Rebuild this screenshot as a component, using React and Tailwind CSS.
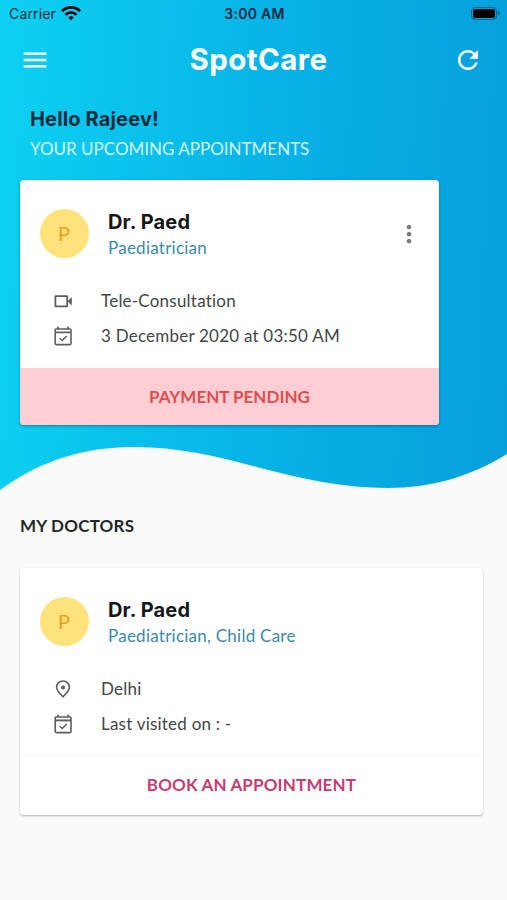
import React from 'react';
import { MdMenu, MdMoreVert, MdRefresh, MdWifi } from 'react-icons/md';

const VideoIcon = () => (
  <svg viewBox="0 0 24 24" className="w-6 h-6" fill="none" stroke="currentColor" strokeWidth="1.8">
    <rect x="4.4" y="7.2" width="11.8" height="10.2" rx="0.3" />
    <path d="M16.6 12.3 L20.8 8 V16.6 Z" fill="currentColor" stroke="none" />
  </svg>
);

const CalendarIcon = () => (
  <svg viewBox="0 0 24 24" className="w-6 h-6" fill="none" stroke="currentColor" strokeWidth="1.6">
    <rect x="4.2" y="5" width="15.8" height="15.6" rx="1" />
    <path d="M4 8.4 H20" strokeWidth="1.9" />
    <path d="M7 2.8 V5 M17.2 2.8 V5" strokeWidth="1.8" />
    <path d="M8.6 14.2 L11.2 16.6 L15.8 12" strokeWidth="1.4" />
  </svg>
);

const PinIcon = () => (
  <svg viewBox="0 0 24 24" className="w-6 h-6" fill="none" stroke="currentColor" strokeWidth="1.6">
    <path d="M12 19.8 C8.6 16.5 5.6 13.4 5.6 10.2 A6.4 6.2 0 0 1 18.4 10.2 C18.4 13.4 15.4 16.5 12 19.8 Z" />
    <circle cx="12" cy="10.5" r="2" fill="currentColor" stroke="none" />
  </svg>
);

const StatusBar = () => {
  return (
    <div className="h-7 pl-[9px] pr-[7px] grid grid-cols-3 items-center text-[#06283a] font-['Inter',sans-serif] text-[14px]">
      <div className="flex items-center gap-1 -mt-0.5">
        <span className="tracking-[0.15px]">Carrier</span>
        <MdWifi className="w-[22px] h-[22px] text-black" />
      </div>
      <span className="text-center font-semibold tracking-[0.3px] -mt-0.5">3:00 AM</span>
      <div className="flex items-center justify-end gap-px -mt-0.5">
        <div className="w-[26px] h-[13px] rounded-[4px] border border-black/40 p-px">
          <div className="h-full rounded-[2px] bg-black" />
        </div>
        <div className="w-[2px] h-1 rounded-r bg-black/40" />
      </div>
    </div>
  );
};

const Doctor = ({ name, speciality }) => (
  <div className="flex items-center flex-1">
    <div className="w-[49px] h-[49px] rounded-full bg-[#fee27c] text-[#eba01f] text-[20px] pb-px pr-px flex items-center justify-center">
      P
    </div>
    <div className="ml-[19px] pt-0.5">
      <h3 className="font-['Inter',sans-serif] font-bold text-[20px] leading-[26px] tracking-[0.15px] text-[#151719]">
        {name}
      </h3>
      <p className="text-[17px] leading-[25px] tracking-[0.25px] text-[#3b8bab]">{speciality}</p>
    </div>
  </div>
);

const Row = ({ icon, children }) => (
  <div className="flex items-center h-[35px] text-[17px] tracking-[0.22px] text-[#444648]">
    <span className="w-6 ml-[31px] mr-[26px] text-[#5c5e60]">{icon}</span>
    <span>{children}</span>
  </div>
);

const App = () => {
  return (
    <div className="w-full min-h-[900px] bg-[#fafafa] font-['Lato',sans-serif]">
      {/* Header */}
      <div className="bg-[linear-gradient(93deg,#0dd1f2_0%,#08b4e7_50%,#069fdc_100%)]">
        <StatusBar />
        <div className="h-[63px] pl-5 pr-6 flex items-center justify-between text-white">
          <MdMenu className="w-[30px] h-[30px]" />
          <h1 className="ml-3.5 font-['Inter',sans-serif] font-bold text-[29.5px] tracking-[0.4px]">
            SpotCare
          </h1>
          <MdRefresh className="w-[30px] h-[30px]" />
        </div>
        <div className="pl-[30px] pt-[14px]">
          <h2 className="font-['Inter',sans-serif] font-bold text-[20px] leading-7 tracking-[0.15px] text-[#07293a]">
            Hello Rajeev!
          </h2>
          <p className="text-[17px] leading-8 text-[#d2f5fd]">YOUR UPCOMING APPOINTMENTS</p>
        </div>

        {/* Upcoming appointment */}
        <div className="mt-[15px] ml-5 w-[419px] h-[245px] flex flex-col rounded-[4px] overflow-hidden bg-white shadow-[0_1px_3px_rgba(0,0,0,0.35)]">
          <div className="h-[188px] pt-[27px]">
            <div className="pl-5 pr-4 flex items-center">
              <Doctor name="Dr. Paed" speciality="Paediatrician" />
              <MdMoreVert className="w-7 h-7 text-[#7b7b7b]" />
            </div>
            <div className="mt-[23px]">
              <Row icon={<VideoIcon />}>Tele-Consultation</Row>
              <Row icon={<CalendarIcon />}>3 December 2020 at 03:50 AM</Row>
            </div>
          </div>
          <button className="flex-1 bg-[#ffcdd4] text-[#db504c] font-bold text-[17px]">PAYMENT PENDING</button>
        </div>

        <svg viewBox="0 0 507 50" className="block w-full h-[50px] mt-[17px]" preserveAspectRatio="none">
          <path
            d="M0 48 C45 15 90 5 135 5 C178 5 215 14 253 24 C300 37 345 46 388 46 C430 46 470 35 507 12 V50 H0 Z"
            fill="#fafafa"
          />
        </svg>
      </div>

      {/* My doctors */}
      <div className="px-5 pt-[22px]">
        <h2 className="text-[17px] leading-6 font-bold tracking-[0.2px] text-[#252729]">MY DOCTORS</h2>
        <div className="mt-[30px] w-[463px] h-[247px] flex flex-col rounded-[4px] bg-white shadow-[0_1px_2px_rgba(0,0,0,0.3)]">
          <div className="h-[187px] pt-[27px]">
            <div className="pl-5 flex items-center">
              <Doctor name="Dr. Paed" speciality="Paediatrician, Child Care" />
            </div>
            <div className="mt-[23px]">
              <Row icon={<PinIcon />}>Delhi</Row>
              <Row icon={<CalendarIcon />}>Last visited on : -</Row>
            </div>
          </div>
          <button className="flex-1 mx-1 pb-px border-t border-[#f7f7f7] text-[#c63c71] font-bold text-[17px] tracking-[0.15px]">
            BOOK AN APPOINTMENT
          </button>
        </div>
      </div>
    </div>
  );
};

export default App;
